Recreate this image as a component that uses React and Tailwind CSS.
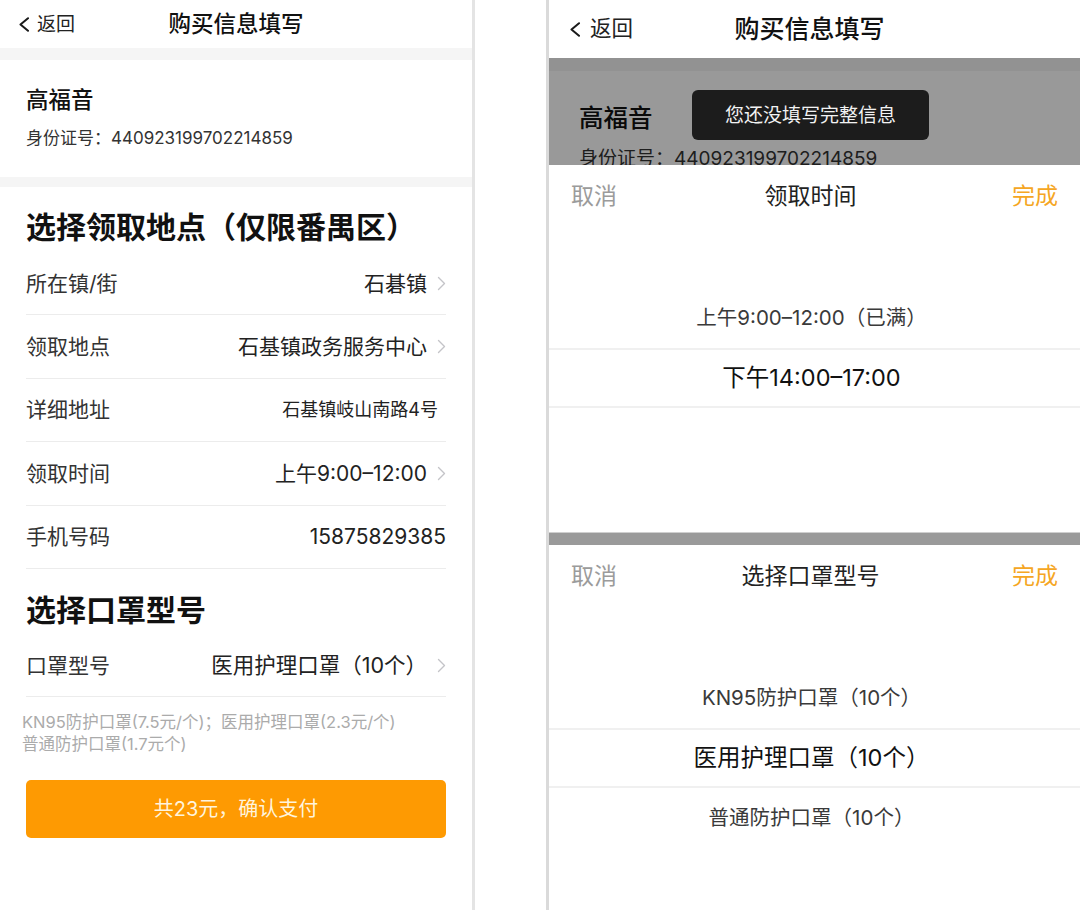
import React from "react";

const Chevron = () => (
  <svg width="9" height="15" viewBox="0 0 9 15" className="shrink-0">
    <path d="M1.5 1.5 L7.5 7.5 L1.5 13.5" fill="none" stroke="#c4c4c8" strokeWidth="1.4" strokeLinecap="round" strokeLinejoin="round" />
  </svg>
);

const BackArrow = ({ w = 12, h = 15 }) => (
  <svg width={w} height={h} viewBox="0 0 12 15" className="shrink-0">
    <path d="M10 1.2 L2.5 7.5 L10 13.8" fill="none" stroke="#1a1a1a" strokeWidth="2" strokeLinecap="round" strokeLinejoin="round" />
  </svg>
);

function Row({ label, value, arrow = true, valueClass = "text-[21px] text-[#222]", h = "h-[63.4px]", pr = "" }) {
  return (
    <div className={`${h} flex items-center justify-between border-b border-[#ececec]`}>
      <span className="text-[21px] leading-none text-[#333]">{label}</span>
      <div className={`flex items-center gap-[10px] ${pr}`}>
        <span className={`${valueClass} leading-none`}>{value}</span>
        {arrow && <Chevron />}
      </div>
    </div>
  );
}

function Picker({ title, items }) {
  return (
    <div className="bg-white flex flex-col">
      <div className="h-[63px] flex items-center justify-between px-[22px]">
        <span className="text-[23px] leading-none text-[#9b9b9b]">取消</span>
        <span className="text-[23px] leading-none text-[#222] mr-[8px]">{title}</span>
        <span className="text-[23px] leading-none text-[#f5a623]">完成</span>
      </div>
      {items.map((it, i) => (
        <div
          key={i}
          className={`h-[60px] flex items-center justify-center ${i === 2 ? "border-y-2 border-[#f0f0f0]" : ""}`}
        >
          <span className={i === 2 ? "text-[23.5px] leading-none text-[#111] mr-[6px]" : "text-[20.5px] leading-none text-[#3a3a3a] mr-[6px]"}>
            {it}
          </span>
        </div>
      ))}
    </div>
  );
}

export default function App() {
  return (
    <div className="w-[1080px] h-[910px] flex bg-white overflow-hidden font-[Inter,'Noto_Sans_CJK_SC',sans-serif] text-[#222]">
      {/* Left phone */}
      <div className="w-[475px] h-full shrink-0 border-r-[3px] border-[#e4e4e4] flex flex-col">
        <div className="h-[48px] grid grid-cols-[1fr_auto_1fr] items-center">
          <div className="flex items-center gap-[7px] pl-[18px]">
            <BackArrow />
            <span className="text-[19px] leading-none text-[#222]">返回</span>
          </div>
          <span className="text-[22.5px] leading-none font-medium text-[#111]">购买信息填写</span>
          <div />
        </div>
        <div className="h-[12px] bg-[#f5f5f5]" />
        <div className="h-[117px] pl-[26px] pt-[25px] flex flex-col">
          <span className="text-[22.5px] leading-[30px] font-medium text-[#111]">高福音</span>
          <span className="mt-[11px] text-[17px] leading-[24px] text-[#333]">身份证号：440923199702214859</span>
        </div>
        <div className="h-[10px] bg-[#f5f5f5]" />
        <div className="px-[26px] flex flex-col">
          <div className="h-[65px] pt-[20px]">
            <span className="text-[30px] leading-[40px] font-bold text-[#111]">选择领取地点（仅限番禺区）</span>
          </div>
          <Row label="所在镇/街" value="石碁镇" />
          <Row label="领取地点" value="石基镇政务服务中心" />
          <Row label="详细地址" value="石基镇岐山南路4号" arrow={false} valueClass="text-[18px] text-[#222]" pr="pr-[8px]" />
          <Row label="领取时间" value="上午9:00–12:00" />
          <Row label="手机号码" value="15875829385" arrow={false} />
          <div className="h-[66px] pt-[21px]">
            <span className="text-[30px] leading-[40px] font-bold text-[#111]">选择口罩型号</span>
          </div>
          <Row label="口罩型号" value="医用护理口罩（10个）" h="h-[62px]" valueClass="text-[21.5px] text-[#222]" />
        </div>
        <div className="pl-[22px] pt-[14px] text-[16.5px] leading-[22px] text-[#ababab]">
          <div>KN95防护口罩(7.5元/个)；医用护理口罩(2.3元/个)</div>
          <div>普通防护口罩(1.7元个)</div>
        </div>
        <div className="px-[26px] mt-[25px]">
          <div className="h-[58px] rounded-[5px] bg-[#fe9a02] flex items-center justify-center">
            <span className="text-[20px] leading-none text-[#fff4dc]">共23元，确认支付</span>
          </div>
        </div>
      </div>

      {/* gap */}
      <div className="w-[71px] shrink-0 bg-white" />

      {/* Right phone */}
      <div className="w-[534px] h-full shrink-0 border-l-[3px] border-[#dadada] flex flex-col">
        <div className="h-[58px] grid grid-cols-[1fr_auto_1fr] items-center">
          <div className="flex items-center gap-[9px] pl-[20px]">
            <BackArrow />
            <span className="text-[21.5px] leading-none text-[#222]">返回</span>
          </div>
          <span className="text-[25px] leading-none font-medium text-[#111] mr-[10px]">购买信息填写</span>
          <div />
        </div>
        <div className="relative h-[107px] overflow-hidden">
          <div className="h-[13px] bg-[#f4f4f4]" />
          <div className="pl-[30px] pt-[31px] flex flex-col">
            <span className="text-[24.5px] leading-[32px] font-medium text-[#111]">高福音</span>
            <span className="mt-[12px] text-[19px] leading-[26px] text-[#333]">身份证号：440923199702214859</span>
          </div>
          <div className="absolute inset-0 bg-black/40" />
          <div className="absolute top-[32px] left-[143px] w-[237px] h-[50px] rounded-[6px] bg-[#1c1c1c] flex items-center justify-center">
            <span className="text-[19px] leading-none text-[#f2f2f2]">您还没填写完整信息</span>
          </div>
        </div>
        <Picker title="领取时间" items={["", "上午9:00–12:00（已满）", "下午14:00–17:00", "", ""]} />
        <div className="h-[4px] bg-white" />
        <div className="h-[13px] bg-[#9a9a9a] border-t border-[#cfcfcf]" />
        <Picker title="选择口罩型号" items={["", "KN95防护口罩（10个）", "医用护理口罩（10个）", "普通防护口罩（10个）", ""]} />
      </div>
    </div>
  );
}
